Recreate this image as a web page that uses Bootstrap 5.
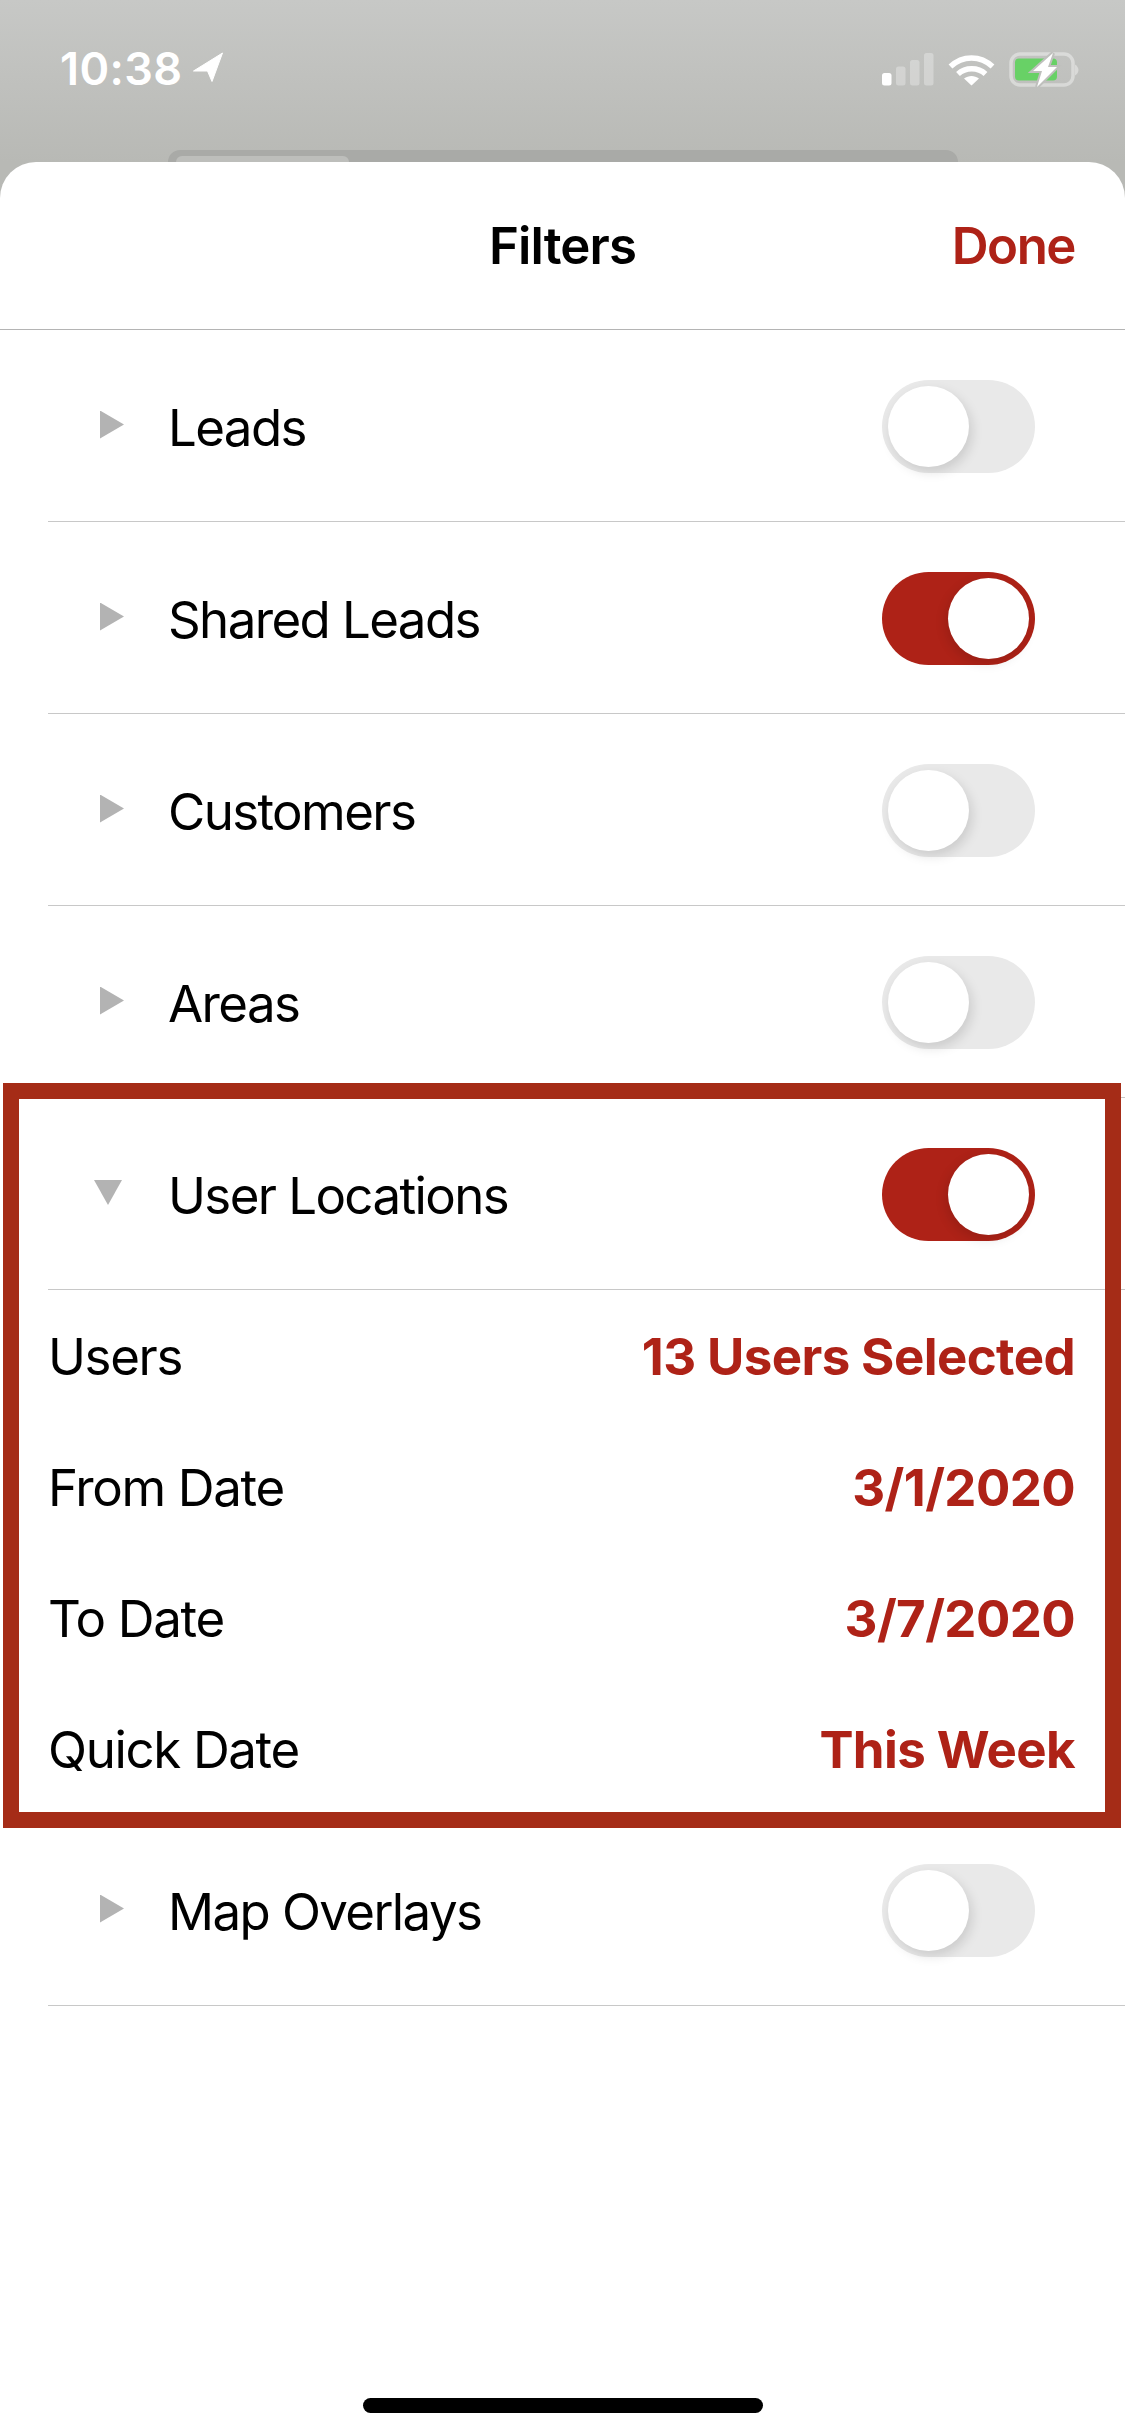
<!DOCTYPE html>
<html lang="en">
<head>
  <meta charset="UTF-8">
  <title>Filters</title>
  <link href="https://cdn.jsdelivr.net/npm/bootstrap@5.3.2/dist/css/bootstrap.min.css" rel="stylesheet">
  <style>
    html, body { height: 100%; }
    body { width: 1125px; height: 2436px; overflow: hidden; background: linear-gradient(180deg, #c7c8c6 0%, #b8b9b5 162px); font-family: Inter, "Liberation Sans", sans-serif; color: #000; }
    .status-area { height: 150px; padding: 52px 44px 0 60px; }
    .status-time { color: #fff; font-size: 45px; font-weight: 600; line-height: 34px; letter-spacing: .4px; }
    .peek-bar { height: 12px; margin: 0 167px 0 168px; padding: 6px 0 0 8px; background: #a9aaa7; border-radius: 24px 24px 0 0; overflow: hidden; }
    .peek-tab { width: 173px; height: 6px; background: #bdbebb; border-radius: 14px 14px 0 0; }
    .sheet { height: 2274px; background: #fff; border-radius: 36px 36px 0 0; }
    .sheet-head { height: 168px; padding-top: 1px; border-bottom: 1.5px solid #b4b4b4; position: relative; }
    .sheet-title { font-size: 51px; font-weight: 600; letter-spacing: -.9px; }
    .sheet-done { position: absolute; right: 50px; top: 50%; transform: translateY(-50%); font-size: 51px; font-weight: 600; letter-spacing: -1.5px; color: #ae2217; }
    .filter-row { height: 192px; margin-left: 48px; padding: 0 90px 0 52px; border-bottom: 1.5px solid #c8c8c8; }
    .filter-name { font-size: 51px; letter-spacing: -1.6px; margin-left: 44px; padding-top: 6px; }
    .arrow-right { width: 24px; height: 28px; background: #b3b3b3; clip-path: polygon(0 0, 100% 50%, 0 100%); margin-top: -2px; }
    .arrow-down { width: 28px; height: 25px; margin: -2px 2px 0 -6px; background: #b3b3b3; clip-path: polygon(0 0, 100% 0, 50% 100%); }
    .toggle-track { width: 153px; height: 93px; margin-top: 1px; padding: 6px; border-radius: 47px; background: #e9e9e9; }
    .toggle-knob { display: block; width: 81px; height: 81px; border-radius: 50%; background: #fff; box-shadow: 3px 5px 12px rgba(0, 0, 0, .13); }
    .toggle-on { background: #ae2217; }
    .toggle-on .toggle-knob { margin-left: 60px; box-shadow: -2px 4px 12px rgba(0, 0, 0, .13); }
    .detail-row { height: 131px; padding: 3px 50px 0 48px; }
    .detail-name { font-size: 51px; letter-spacing: -1.35px; }
    .detail-value { font-size: 51px; font-weight: 700; letter-spacing: -.6px; color: #ae2217; }
    .focus-box { position: absolute; top: -15px; left: 3px; right: 4px; bottom: -14px; border: 16px solid #a52c17; pointer-events: none; }
    .home-bar { position: absolute; left: 363px; top: 2398px; width: 400px; height: 15px; border-radius: 8px; background: #000; }
    .ms-arrow { margin-left: 10px; }
  </style>
</head>
<body>

  <div class="status-area d-flex justify-content-between align-items-start">
    <div class="d-flex align-items-start">
      <span class="status-time">10:38</span>
      <svg class="ms-arrow" width="30" height="30" viewBox="0 0 30 30"><path d="M29.500 1 .5 19h14l4.500 10.500z" fill="#fff" stroke="#fff" stroke-width="1" stroke-linejoin="round"/></svg>
    </div>
    <svg width="206" height="36" viewBox="0 0 206 36">
      <g fill="#fff">
        <rect x="7" y="21" width="9.500" height="12.500" rx="2.500"/>
        <g opacity=".3">
          <rect x="21" y="14.500" width="9.500" height="19" rx="2.500"/>
          <rect x="35" y="8" width="9.500" height="25.500" rx="2.500"/>
          <rect x="49" y="1" width="9.500" height="32.500" rx="2.500"/>
        </g>
      </g>
      <g fill="none" stroke="#fff" stroke-width="5.500">
        <path d="M75.500 14.500c12-11.500 30-11.500 42 0"/>
        <path d="M83 22c7.500-7 20-7 27.500 0"/>
      </g>
      <path d="M96.500 33.500 89 26.500c4.500-3.500 10.500-3.500 15 0z" fill="#fff"/>
      <rect x="136" y="2" width="62" height="31" rx="9" fill="none" stroke="#fff" stroke-opacity=".4" stroke-width="3.500"/>
      <path d="M200 12.500v11c2-1 3.500-3.500 3.500-5.500s-1.500-4.500-3.500-5.500z" fill="#fff" fill-opacity=".4"/>
      <rect x="140" y="6.500" width="42" height="22" rx="4" fill="#68d166"/>
      <path d="M178 1 158 19h9l-5 16 20-20h-9z" fill="#fff" stroke="#bfc0bd" stroke-width="4" paint-order="stroke"/>
    </svg>
  </div>
  <div class="peek-bar"><div class="peek-tab"></div></div>

  <div class="sheet">
    <div class="sheet-head d-flex justify-content-center align-items-center">
      <span class="sheet-title">Filters</span>
      <span class="sheet-done">Done</span>
    </div>

    <div class="filter-row d-flex align-items-center">
      <span class="arrow-right"></span>
      <span class="filter-name flex-grow-1">Leads</span>
      <span class="toggle-track"><span class="toggle-knob"></span></span>
    </div>
    <div class="filter-row d-flex align-items-center">
      <span class="arrow-right"></span>
      <span class="filter-name flex-grow-1">Shared Leads</span>
      <span class="toggle-track toggle-on"><span class="toggle-knob"></span></span>
    </div>
    <div class="filter-row d-flex align-items-center">
      <span class="arrow-right"></span>
      <span class="filter-name flex-grow-1">Customers</span>
      <span class="toggle-track"><span class="toggle-knob"></span></span>
    </div>
    <div class="filter-row d-flex align-items-center">
      <span class="arrow-right"></span>
      <span class="filter-name flex-grow-1">Areas</span>
      <span class="toggle-track"><span class="toggle-knob"></span></span>
    </div>

    <div class="position-relative">
      <div class="filter-row d-flex align-items-center">
        <span class="arrow-down"></span>
        <span class="filter-name flex-grow-1">User Locations</span>
        <span class="toggle-track toggle-on"><span class="toggle-knob"></span></span>
      </div>
      <div class="detail-row d-flex justify-content-between align-items-center">
        <span class="detail-name">Users</span>
        <span class="detail-value">13 Users Selected</span>
      </div>
      <div class="detail-row d-flex justify-content-between align-items-center">
        <span class="detail-name">From Date</span>
        <span class="detail-value">3/1/2020</span>
      </div>
      <div class="detail-row d-flex justify-content-between align-items-center">
        <span class="detail-name">To Date</span>
        <span class="detail-value">3/7/2020</span>
      </div>
      <div class="detail-row d-flex justify-content-between align-items-center">
        <span class="detail-name">Quick Date</span>
        <span class="detail-value">This Week</span>
      </div>
      <div class="focus-box"></div>
    </div>

    <div class="filter-row d-flex align-items-center">
      <span class="arrow-right"></span>
      <span class="filter-name flex-grow-1">Map Overlays</span>
      <span class="toggle-track"><span class="toggle-knob"></span></span>
    </div>
  </div>

  <div class="home-bar"></div>

  <script src="https://cdn.jsdelivr.net/npm/bootstrap@5.3.2/dist/js/bootstrap.bundle.min.js"></script>
</body>
</html>
